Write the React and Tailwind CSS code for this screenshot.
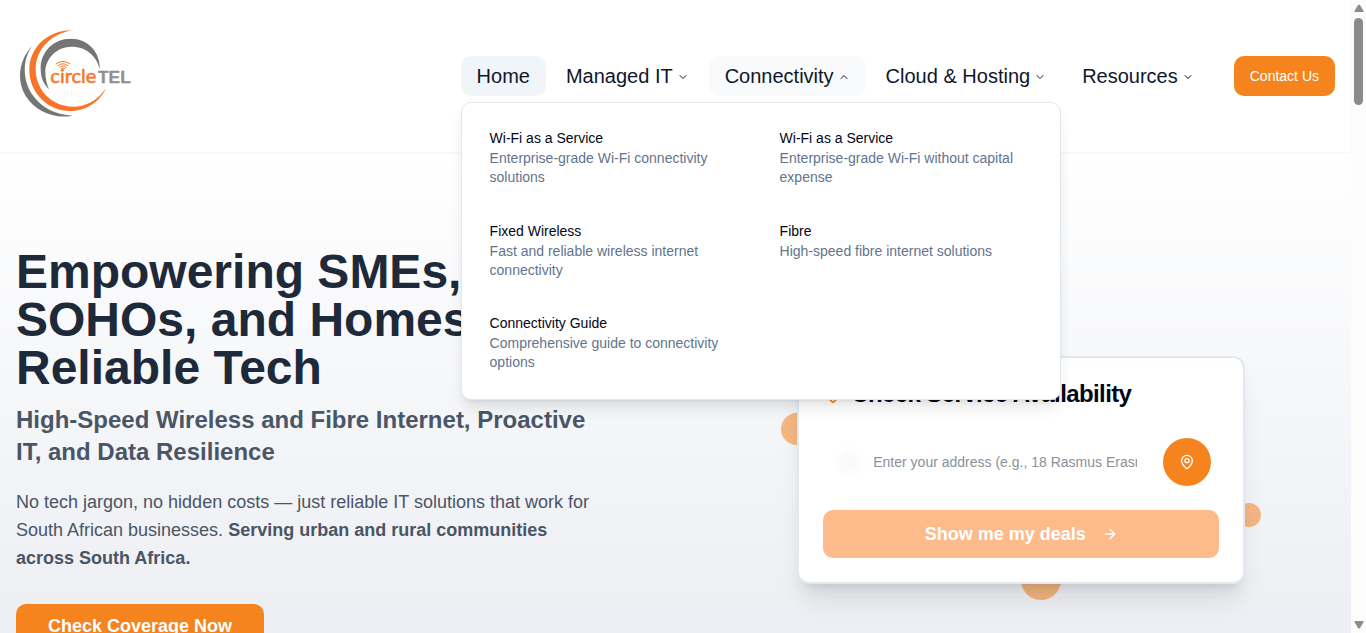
import React from "react";
import { ArrowRight, ChevronDown, MapPin } from "lucide-react";

const services = [
  { title: "Wi-Fi as a Service", text: "Enterprise-grade Wi-Fi connectivity solutions" },
  { title: "Wi-Fi as a Service", text: "Enterprise-grade Wi-Fi without capital expense" },
  { title: "Fixed Wireless", text: "Fast and reliable wireless internet connectivity" },
  { title: "Fibre", text: "High-speed fibre internet solutions" },
  { title: "Connectivity Guide", text: "Comprehensive guide to connectivity options" },
];

function Logo() {
  return (
    <a href="#home" aria-label="circleTEL" className="block">
      <svg viewBox="48 54 360 288" className="h-24 w-[120px]">
        <path
          fill="#757575"
          d="M97 107C62 142 45 205 77 258C105 302 160 328 218 317C170 314 124 295 95 251C68 208 66 150 97 107Z"
        />
        <path
          fill="#f97428"
          d="M218 61C140 60 88 115 88 180C88 250 145 303 210 303C260 303 300 275 318 234C290 275 255 290 220 290C155 290 107 240 107 178C107 120 150 72 218 61Z"
        />
        <path
          fill="#757575"
          d="M147 238C128 220 122 200 122 175C122 125 160 86 213 86C262 86 302 125 299 178C290 135 255 110 215 110C170 110 137 145 136 185C136 205 140 222 147 238Z"
        />
        <g fill="none" stroke="#f97428" strokeWidth="3" strokeLinecap="round">
          <path d="M169 161Q189 147 209 161" />
          <path d="M174 167Q189 155 204 167" />
          <path d="M179 172Q189 163 199 172" />
          <path d="M184 176Q189 171 194 176" />
        </g>
        <text
          x="151"
          y="218"
          fill="#f97428"
          stroke="#f97428"
          strokeWidth="1.5"
          className="font-['Lato',sans-serif] text-[60px] font-normal"
        >
          circle
        </text>
        <text
          x="294"
          y="218"
          fill="#8f8f8f"
          stroke="#8f8f8f"
          strokeWidth="1"
          className="font-['Liberation_Sans',sans-serif] text-[52px] font-bold"
        >
          TEL
        </text>
      </svg>
    </a>
  );
}

function NavItem({ label, open = false }) {
  return (
    <button
      type="button"
      aria-expanded={open}
      className={
        open
          ? "flex h-10 items-center rounded-[10px] bg-slate-50 px-4 text-xl text-slate-900"
          : "flex h-10 items-center rounded-[10px] px-4 text-xl text-slate-900"
      }
    >
      {label}
      <ChevronDown className={open ? "mt-0.5 ml-1 size-3 rotate-180" : "mt-0.5 ml-1 size-3"} />
    </button>
  );
}

function ServicesMenu() {
  return (
    <ul className="absolute top-full left-0 z-20 mt-1.5 grid w-[600px] grid-cols-2 gap-x-3.5 gap-y-3 rounded-[10px] border border-slate-200 bg-white px-4 pt-4 pb-3.5 shadow-lg">
      {services.map((s, i) => (
        <li key={i}>
          <a href="#services" className="block p-3 text-sm">
            <div className="leading-none text-slate-950">{s.title}</div>
            <p className="mt-1 leading-snug text-slate-500">{s.text}</p>
          </a>
        </li>
      ))}
    </ul>
  );
}

function Header() {
  return (
    <header className="relative z-10 flex h-[152px] shrink-0 items-center justify-between bg-white px-4 shadow-xs">
      <Logo />
      <div className="flex items-center gap-6">
        <nav className="relative flex gap-1">
          <a href="#home" className="flex h-10 items-center rounded-[10px] bg-slate-100 px-4 text-xl text-slate-900">
            Home
          </a>
          <NavItem label="Managed IT" />
          <NavItem label="Connectivity" open />
          <NavItem label="Cloud & Hosting" />
          <NavItem label="Resources" />
          <ServicesMenu />
        </nav>
        <button type="button" className="h-10 rounded-[10px] bg-[#f5841f] px-4 text-sm text-white">
          Contact Us
        </button>
      </div>
    </header>
  );
}

function AvailabilityCard() {
  return (
    <div className="relative w-full max-w-md">
      <span className="absolute top-1/4 -left-4 size-8 rounded-full bg-[#f5841f]/55" />
      <span className="absolute -right-4 bottom-1/4 size-6 rounded-full bg-[#f5841f]/55" />
      <span className="absolute -bottom-4 left-1/2 size-10 rounded-full bg-[#f5841f]/55" />
      <form className="relative rounded-xl border-2 border-slate-200 bg-white p-6 shadow-xl">
        <h3 className="flex h-6 items-center text-2xl leading-none font-semibold tracking-tight text-slate-950">
          <MapPin className="mr-2 size-5 text-[#f5841f]" />
          Check Service Availability
        </h3>
        <div className="mt-6 flex h-16 items-center p-2">
          <span className="mx-1.5 size-6 shrink-0 rounded-full bg-neutral-50 blur-xs" />
          <input
            type="text"
            aria-label="Address"
            placeholder="Enter your address (e.g., 18 Rasmus Erasmus Blvd, Centurion)"
            className="mr-[26px] ml-1.5 min-w-0 flex-1 text-sm text-slate-900 outline-none placeholder:text-[#8b9099]"
          />
          <button
            type="button"
            aria-label="Use my location"
            className="flex size-12 shrink-0 items-center justify-center rounded-full bg-[#f5841f] text-white"
          >
            <MapPin className="size-4" />
          </button>
        </div>
        <button
          type="submit"
          className="mt-4 flex h-12 w-full items-center justify-center gap-4 rounded-[10px] bg-[#fdba8b] text-lg font-bold text-white"
        >
          Show me my deals
          <ArrowRight className="size-4" />
        </button>
      </form>
    </div>
  );
}

function Hero() {
  return (
    <section className="flex shrink-0 items-center bg-linear-to-b from-white to-[#e6e9ef] px-4 py-24">
      <div className="w-1/2 pb-11">
        <div className="max-w-xl">
          <h1 className="text-5xl leading-none font-bold text-gray-800">
            Empowering SMEs, SOHOs, and Homes With Reliable Tech
          </h1>
          <h2 className="mt-3 text-2xl font-bold text-gray-600">
            High-Speed Wireless and Fibre Internet, Proactive IT, and Data Resilience
          </h2>
          <p className="mt-5 text-lg text-gray-600">
            No tech jargon, no hidden costs — just reliable IT solutions that work for South African businesses.{" "}
            <strong className="font-bold">Serving urban and rural communities across South Africa.</strong>
          </p>
          <button type="button" className="mt-8 h-11 rounded-[10px] bg-[#f5841f] px-8 text-lg font-bold text-white">
            Check Coverage Now
          </button>
        </div>
      </div>
      <div className="flex w-1/2 justify-center pl-8">
        <AvailabilityCard />
      </div>
    </section>
  );
}

function ScrollBar() {
  return (
    <div aria-hidden="true" className="flex w-[15px] shrink-0 flex-col items-center bg-[#fcfcfc] py-1">
      <svg viewBox="0 0 10 8" className="h-2 w-2.5 shrink-0" fill="#8b8b8b">
        <path d="M4 1Q5 0 6 1L9.500 7Q9.500 8 9 8H1Q.5 8 .5 7Z" />
      </svg>
      <div className="mt-1.5 h-[87px] w-[9px] shrink-0 rounded-full bg-[#8b8b8b]" />
      <svg viewBox="0 0 10 8" className="mt-auto h-2 w-2.5 shrink-0" fill="#8b8b8b">
        <path d="M4 7Q5 8 6 7L9.500 1Q9.500 0 9 0H1Q.5 0 .5 1Z" />
      </svg>
    </div>
  );
}

export default function App() {
  return (
    <div className="flex h-screen overflow-hidden bg-white font-['Liberation_Sans',Arial,sans-serif]">
      <main className="flex min-w-0 flex-1 flex-col overflow-hidden">
        <Header />
        <Hero />
      </main>
      <ScrollBar />
    </div>
  );
}
